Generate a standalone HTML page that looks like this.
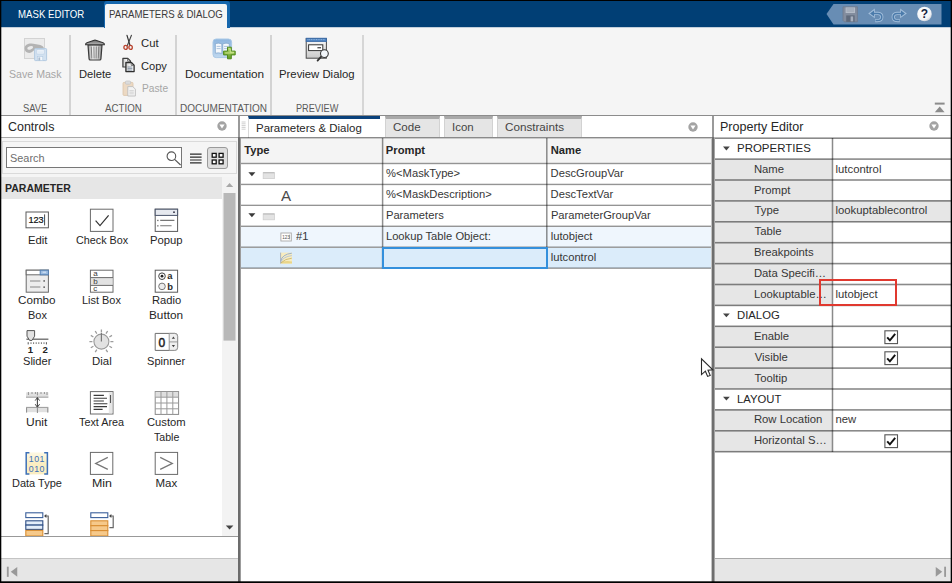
<!DOCTYPE html>
<html lang="en"><head><meta charset="utf-8"><title>Mask Editor</title>
<style>
html,body{margin:0;padding:0;}
body{width:952px;height:583px;overflow:hidden;background:#fff;position:relative;font-family:"Liberation Sans",sans-serif;}
.a{position:absolute;box-sizing:border-box;}
.t{position:absolute;white-space:nowrap;line-height:normal;transform-origin:0 50%;font-family:"Liberation Sans",sans-serif;}
svg{position:absolute;overflow:visible;}
</style></head><body>
<!-- blue title strip -->
<div class="a" style="left:0;top:0;width:952px;height:27px;background:#013f75;"></div>
<div class="a" style="left:0;top:27px;width:952px;height:1px;background:#c2cfdb;"></div>
<!-- toolstrip body -->
<div class="a" style="left:0;top:28px;width:952px;height:87px;background:#f5f5f5;"></div>
<div class="a" style="left:0;top:115px;width:952px;height:1px;background:#8c8c8c;"></div>
<!-- active top tab -->
<div class="a" style="left:104px;top:1px;width:126px;height:27px;background:#1667ad;border-radius:3px 3px 0 0;"></div>
<div class="a" style="left:105px;top:4px;width:122px;height:25px;background:#f5f5f5;border-radius:2px 2px 0 0;"></div>
<!-- toolstrip separators -->
<div class="a" style="left:69px;top:35px;width:2px;height:80px;background:#d3d3d3;"></div>
<div class="a" style="left:175px;top:35px;width:2px;height:80px;background:#d3d3d3;"></div>
<div class="a" style="left:270px;top:35px;width:2px;height:80px;background:#d3d3d3;"></div>
<div class="a" style="left:362px;top:35px;width:2px;height:80px;background:#d6d6d6;"></div>
<!-- Save Mask icon (disabled) -->
<svg style="left:23px;top:37px" width="26" height="26" viewBox="0 0 26 26">
  <rect x="1.5" y="1.5" width="20" height="20" fill="#ebebeb" stroke="#d3d3d3" stroke-width="1"/>
  <path d="M1.6 11.6 C1.6 8.4 4.4 6.6 8.4 6.6 C11.4 6.6 12.6 7.4 14.6 7.6 C18.6 8 21 9.6 21 12 C21 14.4 19 15.8 16.4 15.4 C14.2 15 13.6 13 12 13 C10.2 13 9.4 16 6.2 16 C3.4 16 1.6 14.2 1.6 11.6 Z" fill="#b3b3b3"/>
  <ellipse cx="7.2" cy="10.9" rx="3" ry="1.6" fill="#ebebeb" transform="rotate(-16 7.2 10.9)"/>
  <rect x="11.6" y="11.6" width="12" height="12" rx=".8" fill="#d2e1f0" stroke="#b3cae1" stroke-width="1"/>
  <rect x="13.9" y="12.6" width="7.2" height="4.4" fill="#f1f6fb" stroke="#b9cee3" stroke-width=".6"/>
  <path d="M15 14.2 H20 M15 15.6 H20" stroke="#d2e1f0" stroke-width=".6"/>
  <rect x="14.6" y="19.6" width="5.2" height="4" fill="#f4f8fc" stroke="#b3cae1" stroke-width=".6"/>
  <rect x="15.4" y="20.4" width="1.8" height="3.2" fill="#a9bccf"/>
</svg>
<!-- Delete (trash) -->
<svg style="left:84px;top:38px" width="22" height="24" viewBox="0 0 22 24">
  <defs><linearGradient id="tg" x1="0" x2="1" y1="0" y2="0"><stop offset="0" stop-color="#9c9c9c"/><stop offset=".35" stop-color="#f0f0f0"/><stop offset=".7" stop-color="#d2d2d2"/><stop offset="1" stop-color="#8c8c8c"/></linearGradient>
  <linearGradient id="tl" x1="0" x2="0" y1="0" y2="1"><stop offset="0" stop-color="#6a6a6a"/><stop offset="1" stop-color="#b8b8b8"/></linearGradient></defs>
  <path d="M4 7 L18 7 L16.9 21 Q16.8 22 15.8 22 L6.2 22 Q5.2 22 5.1 21 Z" fill="url(#tg)" stroke="#3a3a3a" stroke-width="1.2"/>
  <path d="M7.3 8.5 L7.8 20.5 M9.9 8.5 L10.1 20.5 M12.3 8.5 L12.1 20.5 M14.8 8.5 L14.3 20.5" stroke="#6a6a6a" stroke-width=".8" fill="none"/>
  <path d="M1.6 6.8 Q1.4 5.4 3 4.8 L9.5 2.4 Q11 1.9 12.5 2.4 L19 4.8 Q20.6 5.4 20.4 6.8 Z" fill="url(#tl)" stroke="#333" stroke-width="1.1"/>
</svg>
<!-- Cut -->
<svg style="left:122px;top:34px" width="14" height="18" viewBox="0 0 14 18">
  <path d="M5 1.4 L8 11.4" stroke="#333" stroke-width="1.2" stroke-linecap="round"/>
  <path d="M9.4 1.4 L5.4 11.4" stroke="#444" stroke-width="1.2" stroke-linecap="round"/>
  <ellipse cx="3.6" cy="13.4" rx="1.7" ry="2" fill="none" stroke="#b8412c" stroke-width="1.3"/>
  <ellipse cx="8.6" cy="13.4" rx="1.7" ry="2" fill="none" stroke="#b8412c" stroke-width="1.3"/>
</svg>
<!-- Copy -->
<svg style="left:122px;top:57px" width="14" height="16" viewBox="0 0 14 16">
  <defs><linearGradient id="cpg" x1="0" x2="1" y1="0" y2="0"><stop offset="0" stop-color="#c9c9c9"/><stop offset=".6" stop-color="#fbfbfb"/></linearGradient></defs>
  <path d="M.9 1.3 L5.8 1.3 L8.4 3.9 L8.4 10 L.9 10 Z" fill="url(#cpg)" stroke="#3c3c3c" stroke-width="1.2" stroke-linejoin="round"/>
  <path d="M5.6 1.6 V4.2 H8.2" fill="none" stroke="#555" stroke-width=".8"/>
  <path d="M3.9 5.5 L9.4 5.5 L12.1 8.2 L12.1 14.6 L3.9 14.6 Z" fill="url(#cpg)" stroke="#2e2e2e" stroke-width="1.3" stroke-linejoin="round"/>
  <path d="M9.2 5.8 V8.4 H11.8" fill="none" stroke="#555" stroke-width=".8"/>
  <path d="M5.6 10 H10.4 M5.6 11.6 H10.4 M5.6 13.1 H10.4" stroke="#6f7f92" stroke-width=".8"/>
</svg>
<!-- Paste (disabled) -->
<svg style="left:122px;top:80px" width="15" height="17" viewBox="0 0 15 17">
  <rect x="1" y="2.4" width="10" height="13" rx="1" fill="#ecd9c3" stroke="#dcc4a8" stroke-width=".8"/>
  <rect x="3.4" y="1" width="5.2" height="3.2" rx="1" fill="#dcdcdc" stroke="#c4c4c4" stroke-width=".7"/>
  <path d="M5.8 6.6 L10.8 6.6 L13.4 9.2 L13.4 16 L5.8 16 Z" fill="#f3f3f3" stroke="#bdbdbd" stroke-width=".9"/>
  <path d="M7.4 10.6 H11.8 M7.4 12.2 H11.8 M7.4 13.8 H11.8" stroke="#c8c8c8" stroke-width=".7"/>
</svg>
<!-- Documentation -->
<svg style="left:212px;top:38px" width="26" height="23" viewBox="0 0 26 23">
  <defs><linearGradient id="dg" x1="0" x2="0" y1="0" y2="1"><stop offset="0" stop-color="#8db5de"/><stop offset="1" stop-color="#c0d8ef"/></linearGradient>
  <linearGradient id="pg" x1="0" x2="0" y1="0" y2="1"><stop offset="0" stop-color="#b5d66a"/><stop offset="1" stop-color="#5f9a23"/></linearGradient></defs>
  <rect x="1" y="1" width="18.6" height="18.6" rx="3.2" fill="url(#dg)" stroke="#a9c8e6" stroke-width="1"/>
  <path d="M3.4 5.6 Q6.6 4.6 9.8 5.8 L9.8 15.4 Q6.6 14.4 3.4 15.2 Z" fill="#f4f8fc" stroke="#6f97c2" stroke-width=".6"/>
  <path d="M10.8 5.8 Q14 4.6 17.2 5.6 L17.2 15.2 Q14 14.4 10.8 15.4 Z" fill="#f4f8fc" stroke="#6f97c2" stroke-width=".6"/>
  <path d="M4.6 8.4 H8.6 M4.6 10.6 H8.6 M12 8.4 H16 M12 10.6 H16" stroke="#9db8d6" stroke-width=".8"/>
  <path d="M15.5 9.2 L19.3 9.2 L19.3 13.1 L23.2 13.1 L23.2 16.9 L19.3 16.9 L19.3 20.8 L15.5 20.8 L15.5 16.9 L11.6 16.9 L11.6 13.1 L15.5 13.1 Z" fill="url(#pg)" stroke="#4f8a1c" stroke-width="1" stroke-linejoin="round"/>
  <path d="M16.6 10.8 H18.2 V14.2 H21.6 V15 H13.2" stroke="#d9efa0" stroke-width=".8" fill="none"/>
</svg>
<!-- Preview Dialog -->
<svg style="left:305px;top:37px" width="26" height="25" viewBox="0 0 26 25">
  <defs><linearGradient id="wg" x1="0" x2="0" y1="0" y2="1"><stop offset="0" stop-color="#fbfbfb"/><stop offset="1" stop-color="#c9c9c9"/></linearGradient></defs>
  <rect x="1.2" y="1.6" width="20.2" height="19.6" fill="url(#wg)" stroke="#4a4a4a" stroke-width="1"/>
  <rect x="1.2" y="1.2" width="20.2" height="3.4" fill="#4e83c1" stroke="#3a6aa6" stroke-width=".8"/>
  <path d="M2.5 2.6 H20" stroke="#9fc0e6" stroke-width=".8" stroke-dasharray="1 .7"/>
  <rect x="3.6" y="7.8" width="14.2" height="5.8" fill="#fff" stroke="#333" stroke-width="1"/>
  <path d="M12.4 10.7 H16" stroke="#555" stroke-width="1.4"/>
  <path d="M16.4 19.4 L12.6 23.6" stroke="#333" stroke-width="1.8" stroke-linecap="round"/>
  <circle cx="19.4" cy="16.6" r="3.9" fill="#f2f6fa" stroke="#3a3a3a" stroke-width="1.1"/>
</svg>
<!-- quick access -->
<svg style="left:826px;top:4px" width="116" height="21" viewBox="0 0 116 21">
  <path d="M0.5 10 L7.5 0 L115.5 0 L115.5 20.5 L7.5 20.5 Z" fill="#688db4"/>
  <!-- floppy -->
  <g>
   <path d="M17 2.8 L31.4 2.8 L31.4 17.8 L18.4 17.8 L17 16.4 Z" fill="#838d9e" stroke="#707a8c" stroke-width=".8"/>
   <rect x="19.6" y="3.4" width="9.4" height="5.6" fill="#b4bcc8"/>
   <path d="M20.6 5 H28 M20.6 7 H28" stroke="#8f99a8" stroke-width=".8"/>
   <rect x="20.2" y="11.4" width="8.4" height="6.4" fill="#5f6a7c"/>
   <rect x="24.6" y="12.4" width="2.6" height="5" fill="#a7b0be"/>
  </g>
  <!-- undo -->
  <g transform="translate(0,1)">
  <path d="M48 8.4 L52 8.4 Q55.8 8.6 55.8 12 Q55.8 15.6 51.4 15.6 L49.2 15.6" fill="none" stroke="#a3bfdb" stroke-width="3.2"/>
  <path d="M42.2 8.4 L48.8 3.6 L48.8 13.2 Z" fill="#a3bfdb"/>
  <path d="M48 8.4 L52 8.4 Q55.8 8.6 55.8 12 Q55.8 15.6 51.4 15.6 L49.6 15.6" fill="none" stroke="#4b7bab" stroke-width="1.5"/>
  <path d="M44 8.4 L48 5.4 L48 11.4 Z" fill="#4b7bab"/>
  <!-- redo -->
  <path d="M75 8.4 L71 8.4 Q67.2 8.6 67.2 12 Q67.2 15.6 71.6 15.6 L73.8 15.6" fill="none" stroke="#a3bfdb" stroke-width="3.2"/>
  <path d="M80.8 8.4 L74.2 3.6 L74.2 13.2 Z" fill="#a3bfdb"/>
  <path d="M75 8.4 L71 8.4 Q67.2 8.6 67.2 12 Q67.2 15.6 71.6 15.6 L73.4 15.6" fill="none" stroke="#4b7bab" stroke-width="1.5"/>
  <path d="M79 8.4 L75 5.4 L75 11.4 Z" fill="#4b7bab"/>
  </g>
  <!-- help -->
  <defs><radialGradient id="hg" cx=".4" cy=".35" r=".7"><stop offset="0" stop-color="#fff"/><stop offset=".75" stop-color="#f1f3f6"/><stop offset="1" stop-color="#c3c9d2"/></radialGradient></defs>
  <circle cx="98.5" cy="10" r="7.3" fill="url(#hg)"/>
  <text x="98.5" y="14.3" text-anchor="middle" font-family="Liberation Sans, sans-serif" font-weight="700" font-size="12" fill="#15233f">?</text>
</svg>
<!-- collapse -->
<svg style="left:934px;top:102px" width="12" height="11" viewBox="0 0 12 11">
  <rect x=".8" y=".6" width="9.8" height="2" fill="#8c8c8c"/>
  <path d="M5.7 4.4 L10.6 10.2 L.8 10.2 Z" fill="#8c8c8c"/>
</svg>


<!-- ===== left panel ===== -->
<div class="a" style="left:1px;top:116px;width:237px;height:22px;background:#fff;"></div>
<div class="a" style="left:1px;top:137px;width:237px;height:1px;background:rgba(0,0,0,0.342);"></div>
<div class="a" style="left:1px;top:138px;width:237px;height:1px;background:rgba(0,0,0,0.198);"></div>
<div class="a" style="left:1px;top:138px;width:237px;height:399px;background:#f5f5f5;"></div>
<!-- search row frame -->
<div class="a" style="left:2px;top:141px;width:235px;height:33px;border:1px solid #dadada;background:#f5f5f5;"></div>
<div class="a" style="left:6px;top:147px;width:176px;height:21px;border:1px solid #777;background:#fff;"></div>
<div class="a" style="left:207px;top:147px;width:21px;height:22px;border:1px solid #9a9a9a;background:#dedede;border-radius:3px;"></div>
<!-- list area -->
<div class="a" style="left:1px;top:177px;width:222px;height:360px;background:#fff;"></div>
<div class="a" style="left:1px;top:177px;width:221px;height:22px;background:#e6e6e6;"></div>
<!-- scrollbar -->
<div class="a" style="left:222px;top:177px;width:15px;height:360px;background:#f3f3f3;"></div>
<svg style="left:223px;top:193px" width="14" height="148"><rect x=".5" y="0" width="12" height="147.6" fill="#b8b8b8"/></svg>
<!-- header dropdown circle -->
<svg style="left:216.6px;top:121.4px" width="10" height="10" viewBox="0 0 10 10"><circle cx="5" cy="5" r="4.7" fill="#a3a3a3"/><path d="M2.4 3.4 L7.6 3.4 L5 7.4 Z" fill="#fff"/></svg>
<!-- magnifier -->
<svg style="left:165px;top:150px" width="18" height="17" viewBox="0 0 18 17"><circle cx="6.4" cy="6.2" r="4.3" fill="none" stroke="#555" stroke-width="1.1"/><path d="M9.6 9.4 L15.6 15" stroke="#555" stroke-width="1.2"/></svg>
<!-- list view icon -->
<svg style="left:190px;top:152px" width="12" height="13" viewBox="0 0 12 13"><path d="M0 2.2 H11.6 M0 5.1 H11.6 M0 8 H11.6 M0 10.9 H11.6" stroke="#2b2b2b" stroke-width="1.2"/></svg>
<!-- grid icon -->
<svg style="left:211px;top:152px" width="14" height="13" viewBox="0 0 14 13">
 <rect x="1.2" y="1.4" width="4" height="3.8" fill="#fff" stroke="#111" stroke-width="1.3"/>
 <rect x="8.1" y="1.4" width="4" height="3.8" fill="#fff" stroke="#111" stroke-width="1.3"/>
 <rect x="1.2" y="8" width="4" height="3.8" fill="#fff" stroke="#111" stroke-width="1.3"/>
 <rect x="8.1" y="8" width="4" height="3.8" fill="#fff" stroke="#111" stroke-width="1.3"/>
</svg>
<!-- scrollbar arrows -->
<svg style="left:225px;top:182px" width="10" height="6" viewBox="0 0 10 6"><path d="M1 5 L4.6 1 L8.2 5 Z" fill="#a8a8a8"/></svg>
<svg style="left:225px;top:524px" width="10" height="7" viewBox="0 0 10 7"><path d="M.8 1.4 L8.4 1.4 L4.6 5.6 Z" fill="#444"/></svg>

<!-- Edit -->
<svg style="left:25px;top:211px" width="25" height="18" viewBox="0 0 25 18">
 <rect x="1" y="1" width="22.4" height="15.8" fill="#fff" stroke="#5a5a5a" stroke-width="1"/>
 <text x="3.4" y="12.4" font-family="Liberation Sans, sans-serif" font-weight="400" font-size="9.2" fill="#111" stroke="#111" stroke-width=".2">123</text>
 <path d="M19.6 3.4 V14.4" stroke="#333" stroke-width=".9"/>
</svg>
<!-- Check Box -->
<svg style="left:89px;top:208px" width="26" height="25" viewBox="0 0 26 25">
 <rect x="1.4" y="1.2" width="22.6" height="22.2" fill="#fff" stroke="#6a6a6a" stroke-width="1"/>
 <path d="M6.6 12.6 L11 17.6 L19.6 7.4" fill="none" stroke="#333" stroke-width="1.2"/>
</svg>
<!-- Popup -->
<svg style="left:154px;top:208px" width="26" height="25" viewBox="0 0 26 25">
 <rect x="1.2" y="1.2" width="22.4" height="22.2" fill="#fff" stroke="#5a5a5a" stroke-width="1"/>
 <rect x="1.2" y="1.2" width="22.4" height="6.2" fill="#e6e9ef" stroke="#4a546a" stroke-width="1"/>
 <rect x="19" y="3.4" width="2" height="1.6" fill="#556"/>
 <path d="M6.2 12.4 H20.4 M6.2 17.8 H17.6" stroke="#777" stroke-width="1.1"/>
 <rect x="3.2" y="11.8" width="1.3" height="1.3" fill="#666"/><rect x="3.2" y="17.2" width="1.3" height="1.3" fill="#666"/>
</svg>
<!-- Combo Box -->
<svg style="left:25px;top:269px" width="25" height="25" viewBox="0 0 25 25">
 <rect x="1.2" y="1.2" width="22.2" height="22" fill="#ededed" stroke="#6a6a6a" stroke-width="1"/>
 <rect x="1.2" y="1.2" width="22.2" height="4.6" fill="#fff" stroke="#6a6a6a" stroke-width="1"/>
 <rect x="15.2" y="1.2" width="8.2" height="4.6" fill="#9dbde2" stroke="#5580b4" stroke-width="1"/>
 <path d="M17.6 3.2 h3.4" stroke="#dbe8f6" stroke-width="1"/>
 <path d="M5 12 H15.4 M5 18 H15.4" stroke="#888" stroke-width="1.1"/>
 <rect x="18.4" y="11.2" width="1.5" height="1.5" fill="#555"/><rect x="18.4" y="17.4" width="1.5" height="1.5" fill="#555"/>
</svg>
<!-- List Box -->
<svg style="left:89px;top:269px" width="26" height="25" viewBox="0 0 26 25">
 <rect x="1.4" y="1.2" width="22.6" height="22" fill="#fff" stroke="#6a6a6a" stroke-width="1"/>
 <rect x="1.9" y="8.6" width="21.6" height="7.8" fill="#e2e2e2"/>
 <path d="M1.4 8.6 H24 M1.4 16.4 H24" stroke="#6a6a6a" stroke-width="1"/>
 <text x="4.2" y="7.2" font-family="Liberation Sans, sans-serif" font-size="8" fill="#3a3a3a">a</text>
 <text x="4.2" y="15.4" font-family="Liberation Sans, sans-serif" font-size="8" fill="#3a3a3a">b</text>
 <text x="4.2" y="22.4" font-family="Liberation Sans, sans-serif" font-size="8" fill="#3a3a3a">c</text>
</svg>
<!-- Radio Button -->
<svg style="left:154px;top:269px" width="26" height="25" viewBox="0 0 26 25">
 <rect x="1.2" y="1.2" width="22.4" height="22" fill="#fff" stroke="#5a5a5a" stroke-width="1"/>
 <circle cx="8" cy="7.2" r="3.3" fill="#fff" stroke="#444" stroke-width="1"/><circle cx="8" cy="7.2" r="1.4" fill="#222"/>
 <circle cx="8" cy="17.4" r="3.3" fill="#ececec" stroke="#777" stroke-width="1"/>
 <text x="13.2" y="10.2" font-family="Liberation Sans, sans-serif" font-weight="700" font-size="9.4" fill="#2a2a2a">a</text>
 <text x="13.2" y="20.8" font-family="Liberation Sans, sans-serif" font-weight="700" font-size="9.4" fill="#2a2a2a">b</text>
</svg>
<!-- Slider -->
<svg style="left:25px;top:329px" width="25" height="26" viewBox="0 0 25 26">
 <path d="M1.4 10.2 H23.4" stroke="#666" stroke-width="1.3"/>
 <path d="M2 1.6 H9.6 V7.2 L7 11.4 H4.6 L2 7.2 Z" fill="#e2e2e2" stroke="#555" stroke-width="1"/>
 <path d="M3.2 13.2 v2.2 M6 13.4 v1.4 M8.6 13.4 v1.4 M11.2 13.4 v1.4 M13.8 13.4 v1.4 M16.4 13.4 v1.4 M19 13.4 v1.4 M21.4 13.2 v2.2" stroke="#555" stroke-width="1"/>
 <text x="2.8" y="24.4" font-family="Liberation Sans, sans-serif" font-weight="700" font-size="9.6" fill="#222">1</text>
 <text x="17.6" y="24.4" font-family="Liberation Sans, sans-serif" font-weight="700" font-size="9.6" fill="#222">2</text>
</svg>
<!-- Dial -->
<svg style="left:89px;top:329px" width="26" height="26" viewBox="0 0 26 26">
 <g stroke="#9c9c9c" stroke-width="1.3">
 <path d="M12.4 .6 V3.4 M18.6 2 L17 4.6 M23 6.4 L20.4 8 M24.4 12.6 H21.4 M23 18.8 L20.4 17.2 M18.6 23.2 L17 20.6 M6.2 2 L7.8 4.6 M1.8 6.4 L4.4 8 M.4 12.6 H3.4 M1.8 18.8 L4.4 17.2 M6.2 23.2 L7.8 20.6"/>
 </g>
 <circle cx="12.4" cy="12.6" r="7.5" fill="#e2e2e2" stroke="#9a9a9a" stroke-width="1.1"/>
 <path d="M12.4 12.6 V4" stroke="#7a7a7a" stroke-width="1.2"/>
</svg>
<!-- Spinner -->
<svg style="left:154px;top:332px" width="26" height="20" viewBox="0 0 26 20">
 <path d="M1.2 1.4 H20.6 Q23.6 1.4 23.6 4.4 V15.4 Q23.6 18.4 20.6 18.4 H1.2 Z" fill="#fff" stroke="#6e6e6e" stroke-width="1"/>
 <path d="M15.2 1.4 H20.6 Q23.6 1.4 23.6 4.4 V15.4 Q23.6 18.4 20.6 18.4 H15.2 Z" fill="#efefef" stroke="#8e8e8e" stroke-width=".9"/>
 <path d="M15.2 9.9 H23.6" stroke="#8e8e8e" stroke-width=".9"/>
 <path d="M17.8 6.8 L19.4 4.6 L21 6.8 Z M17.8 13 L19.4 15.2 L21 13 Z" fill="#444"/>
 <text x="4.6" y="14.6" font-family="Liberation Sans, sans-serif" font-weight="400" font-size="12" fill="#1a1a1a" stroke="#1a1a1a" stroke-width=".45">0</text>
</svg>
<!-- Unit -->
<svg style="left:25px;top:391px" width="25" height="24" viewBox="0 0 25 24">
 <rect x="1" y="1.4" width="22.4" height="4.6" fill="#e0e0e0"/>
 <path d="M1 6.2 H23.4" stroke="#9a9a9a" stroke-width="1"/>
 <path d="M3.4 1 v3 M7 1 v2 M10.4 1 v2 M12.4 1 v3.4 M16 1 v2 M19.4 1 v2 M22 1 v3" stroke="#8a8a8a" stroke-width=".9"/>
 <rect x="1" y="16.6" width="22.4" height="4.6" fill="#e0e0e0"/>
 <path d="M1 16.4 H23.4" stroke="#9a9a9a" stroke-width="1"/>
 <path d="M1.6 17 v4.6 M22.8 17 v4.6 M12.4 17 v5" stroke="#8a8a8a" stroke-width="1"/>
 <path d="M12.4 6.6 V16" stroke="#444" stroke-width="1.1"/>
 <path d="M10.2 9.6 L12.4 6.6 L14.6 9.6 M10.2 13.2 L12.4 16.2 L14.6 13.2" fill="none" stroke="#444" stroke-width="1"/>
</svg>
<!-- Text Area -->
<svg style="left:89px;top:390px" width="26" height="25" viewBox="0 0 26 25">
 <rect x="1.4" y="1.6" width="22.6" height="22.4" fill="#fff" stroke="#6a6a6a" stroke-width="1"/>
 <rect x="19.8" y="2.2" width="3.6" height="21.2" fill="#e6e6e6"/>
 <path d="M21.5 5 V13" stroke="#555" stroke-width="1.1"/>
 <path d="M4.6 5.4 H14.9 M4.6 8.2 H18 M4.6 11 H14.9 M4.6 13.8 H18.4 M4.6 16.6 H18 M4.6 19.4 H13.6" stroke="#3a3a3a" stroke-width="1.1"/>
</svg>
<!-- Custom Table -->
<svg style="left:154px;top:390px" width="27" height="26" viewBox="0 0 27 26">
 <rect x="1.2" y="1.6" width="23.4" height="22.8" fill="#fff" stroke="#8a8a8a" stroke-width="1"/>
 <rect x="1.7" y="2.1" width="22.4" height="5" fill="#dedede"/>
 <path d="M1.2 7.2 H24.6 M1.2 13 H24.6 M1.2 18.8 H24.6 M7 1.6 V24.4 M12.9 1.6 V24.4 M18.8 1.6 V24.4" stroke="#9a9a9a" stroke-width="1"/>
</svg>
<!-- Data Type -->
<svg style="left:24px;top:451px" width="26" height="25" viewBox="0 0 26 25">
 <defs><linearGradient id="dtg" x1="0" x2="0" y1="0" y2="1"><stop offset="0" stop-color="#fdf8e4"/><stop offset=".5" stop-color="#fbeec2"/><stop offset="1" stop-color="#fbeec2"/></linearGradient></defs>
 <rect x="2" y="1.4" width="21.6" height="22" fill="url(#dtg)"/>
 <path d="M5.4 1.8 H2.2 V23 H5.4 M20.2 1.8 H23.4 V23 H20.2" fill="none" stroke="#3d70b8" stroke-width="1.5"/>
 <text x="12.9" y="10.6" text-anchor="middle" font-family="Liberation Sans, sans-serif" font-size="8.8" fill="#3d70b8" letter-spacing=".5">101</text>
 <text x="12.9" y="20.6" text-anchor="middle" font-family="Liberation Sans, sans-serif" font-size="8.8" fill="#3d70b8" letter-spacing=".5">010</text>
</svg>
<!-- Min -->
<svg style="left:89px;top:451px" width="26" height="25" viewBox="0 0 26 25">
 <rect x="1.4" y="1.4" width="22.4" height="22" fill="#fff" stroke="#6a6a6a" stroke-width="1"/>
 <path d="M18.8 6.4 L6.6 12.4 L18.8 18.4" fill="none" stroke="#777" stroke-width="1.2"/>
</svg>
<!-- Max -->
<svg style="left:154px;top:451px" width="26" height="25" viewBox="0 0 26 25">
 <rect x="1.2" y="1.4" width="22.4" height="22" fill="#fff" stroke="#6a6a6a" stroke-width="1"/>
 <path d="M6.2 6.4 L18.4 12.4 L6.2 18.4" fill="none" stroke="#777" stroke-width="1.2"/>
</svg>
<!-- row 6 a -->
<svg style="left:24px;top:511px" width="27" height="26" viewBox="0 0 27 26">
 <rect x="1.8" y="1.8" width="17" height="4.8" fill="#fff" stroke="#3a5f9a" stroke-width="1.1"/>
 <rect x="1.8" y="9.8" width="17" height="4.3" fill="#e4eef9" stroke="#2f4f86" stroke-width="1.1"/>
 <rect x="1.8" y="14.1" width="17" height="4.3" fill="#e4eef9" stroke="#2f4f86" stroke-width="1.1"/>
 <rect x="1.8" y="19.4" width="17" height="5.6" fill="#f6c98a" stroke="#d98e32" stroke-width="1.1"/>
 <path d="M20.4 22.6 H24.2 V5 H21.6" fill="none" stroke="#666" stroke-width="1.2"/>
 <path d="M20 5 L22.4 3 V7 Z" fill="#444"/>
</svg>
<!-- row 6 b -->
<svg style="left:89px;top:511px" width="27" height="26" viewBox="0 0 27 26">
 <rect x="1.8" y="1.8" width="17" height="4.8" fill="#fff" stroke="#3a5f9a" stroke-width="1.1"/>
 <rect x="1.8" y="9.8" width="17" height="4.9" fill="#f6c98a" stroke="#d98e32" stroke-width="1.1"/>
 <rect x="1.8" y="14.7" width="17" height="4.9" fill="#f6c98a" stroke="#d98e32" stroke-width="1.1"/>
 <rect x="1.8" y="19.6" width="17" height="5.4" fill="#f6c98a" stroke="#d98e32" stroke-width="1.1"/>
 <path d="M20.4 16.6 H24.2 V5 H21.6" fill="none" stroke="#666" stroke-width="1.2"/>
 <path d="M20 5 L22.4 3 V7 Z" fill="#444"/>
</svg>

<div class="a" style="left:1px;top:536px;width:237px;height:1px;background:#999;"></div>
<div class="a" style="left:1px;top:537px;width:237px;height:22px;background:#fff;"></div>
<div class="a" style="left:1px;top:558px;width:237px;height:1px;background:#c4c4c4;"></div>
<div class="a" style="left:1px;top:559px;width:237px;height:23px;background:#e6e6e6;"></div>

<!-- ===== center panel ===== -->
<div class="a" style="left:240px;top:116px;width:472px;height:22px;background:#fff;"></div>
<!-- active tab -->
<div class="a" style="left:248px;top:116px;width:132px;height:22px;background:#fff;border-top:3px solid #0a417b;border-left:1px solid #d8d8d8;"></div>

<div class="a" style="left:385px;top:116px;width:55px;height:21px;background:#e5e5e5;border-top:3px solid #a9a9a9;border-left:1px solid #d2d2d2;border-right:1px solid #d2d2d2;"></div>
<div class="a" style="left:444px;top:116px;width:49px;height:21px;background:#e5e5e5;border-top:3px solid #a9a9a9;border-left:1px solid #d2d2d2;border-right:1px solid #d2d2d2;"></div>
<div class="a" style="left:497px;top:116px;width:85px;height:21px;background:#e5e5e5;border-top:3px solid #a9a9a9;border-left:1px solid #d2d2d2;border-right:1px solid #d2d2d2;"></div>
<div class="a" style="left:240px;top:137px;width:472px;height:1px;background:rgba(0,0,0,0.460);"></div>
<div class="a" style="left:240px;top:138px;width:472px;height:1px;background:rgba(0,0,0,0.207);"></div>
<!-- table header -->
<div class="a" style="left:240px;top:139px;width:472px;height:24px;background:#f4f4f4;"></div>
<!-- rows -->
<div class="a" style="left:240px;top:227px;width:472px;height:20px;background:#eff6fd;"></div>
<div class="a" style="left:240px;top:248px;width:472px;height:20px;background:#dbecfa;"></div>
<div class="a" style="left:241px;top:162px;width:471px;height:1px;background:rgba(0,0,0,0.084);"></div>
<div class="a" style="left:241px;top:163px;width:471px;height:1px;background:rgba(0,0,0,0.420);"></div>
<div class="a" style="left:241px;top:164px;width:471px;height:1px;background:rgba(0,0,0,0.084);"></div>
<div class="a" style="left:241px;top:183px;width:471px;height:1px;background:rgba(0,0,0,0.113);"></div>
<div class="a" style="left:241px;top:184px;width:471px;height:1px;background:rgba(0,0,0,0.420);"></div>
<div class="a" style="left:241px;top:185px;width:471px;height:1px;background:rgba(0,0,0,0.055);"></div>
<div class="a" style="left:241px;top:204px;width:471px;height:1px;background:rgba(0,0,0,0.143);"></div>
<div class="a" style="left:241px;top:205px;width:471px;height:1px;background:rgba(0,0,0,0.420);"></div>
<div class="a" style="left:241px;top:225px;width:471px;height:1px;background:rgba(0,0,0,0.172);"></div>
<div class="a" style="left:241px;top:226px;width:471px;height:1px;background:rgba(0,0,0,0.416);"></div>
<div class="a" style="left:241px;top:246px;width:471px;height:1px;background:rgba(0,0,0,0.202);"></div>
<div class="a" style="left:241px;top:247px;width:471px;height:1px;background:rgba(0,0,0,0.386);"></div>
<div class="a" style="left:241px;top:267px;width:471px;height:1px;background:rgba(0,0,0,0.231);"></div>
<div class="a" style="left:241px;top:268px;width:471px;height:1px;background:rgba(0,0,0,0.357);"></div>
<!-- col lines -->
<div class="a" style="left:381px;top:138px;width:1px;height:131px;background:rgba(0,0,0,0.066);"></div>
<div class="a" style="left:382px;top:138px;width:1px;height:131px;background:rgba(0,0,0,0.440);"></div>
<div class="a" style="left:383px;top:138px;width:1px;height:131px;background:rgba(0,0,0,0.154);"></div>
<div class="a" style="left:546px;top:138px;width:1px;height:131px;background:rgba(0,0,0,0.418);"></div>
<div class="a" style="left:547px;top:138px;width:1px;height:131px;background:rgba(0,0,0,0.242);"></div>
<!-- selected cell -->
<div class="a" style="left:382px;top:247px;width:166px;height:22px;border:2px solid #3490dc;background:#dbecfa;"></div>
<!-- grip -->
<svg style="left:241px;top:121px" width="6" height="10" viewBox="0 0 6 10"><path d="M.6 1 H4.6 M.6 2.8 H4.6 M.6 4.6 H4.6 M.6 6.4 H4.6 M.6 8.2 H4.6" stroke="#c9c9c9" stroke-width=".9"/></svg>
<!-- options circle -->
<svg style="left:687.5px;top:121.5px" width="10" height="10" viewBox="0 0 10 10"><circle cx="5" cy="5" r="4.7" fill="#a3a3a3"/><path d="M2.4 3.4 L7.6 3.4 L5 7.4 Z" fill="#fff"/></svg>
<!-- tree arrows -->
<svg style="left:248px;top:171.6px" width="8" height="5" viewBox="0 0 8 5"><path d="M.4 .3 L7.4 .3 L3.9 4.2 Z" fill="#3a3a3a"/></svg>
<svg style="left:248px;top:213.4px" width="8" height="5" viewBox="0 0 8 5"><path d="M.4 .3 L7.4 .3 L3.9 4.2 Z" fill="#3a3a3a"/></svg>
<!-- group icons -->
<svg style="left:262px;top:171px" width="14" height="9" viewBox="0 0 14 9"><rect x="1.2" y="1.6" width="11.2" height="6" fill="#e3e3e3" stroke="#cfcfcf" stroke-width=".8"/><path d="M1.2 1.8 H12.4" stroke="#b8b8b8" stroke-width="1"/></svg>
<svg style="left:262px;top:212px" width="14" height="9" viewBox="0 0 14 9"><rect x="1.2" y="1.8" width="11.2" height="6" fill="#e3e3e3" stroke="#cfcfcf" stroke-width=".8"/><path d="M1.2 2 H12.4" stroke="#b8b8b8" stroke-width="1"/></svg>
<!-- small edit icon -->
<svg style="left:280px;top:232px" width="13" height="10" viewBox="0 0 13 10"><rect x=".9" y="1" width="10.4" height="8" fill="#fff" stroke="#a8a8a8" stroke-width=".9"/><text x="2.2" y="6.9" font-family="Liberation Sans, sans-serif" font-size="4.6" fill="#555">123</text><path d="M9.6 2.6 V7.4" stroke="#777" stroke-width=".6"/></svg>
<!-- lookup table icon -->
<svg style="left:280px;top:252px" width="13" height="12" viewBox="0 0 13 12">
 <rect x=".6" y=".6" width="11.4" height="11" fill="#f7ecbf"/>
 <path d="M.6 11.6 H12 L12 9.4 Q6 8.4 .6 10 Z" fill="#e9d58a"/>
 <path d="M.8 9 Q2 2.4 11.8 1.2" fill="none" stroke="#8fa9cf" stroke-width=".9"/>
 <path d="M.8 10 Q3.4 4.6 11.8 3.6" fill="none" stroke="#a9bddb" stroke-width=".8"/>
 <path d="M1 10.8 Q5 6.8 11.8 6.2" fill="none" stroke="#c4b06a" stroke-width=".8"/>
 <path d="M.6 .6 V11.6" stroke="#9aa6b8" stroke-width=".8"/>
</svg>

<!-- splitter left/center -->
<div class="a" style="left:238px;top:116px;width:2px;height:21px;background:#9a9a9a;"></div>
<div class="a" style="left:238px;top:137px;width:2px;height:445px;background:#6c6c6c;"></div>
<div class="a" style="left:240px;top:138px;width:1px;height:444px;background:#9c9c9c;"></div>
<!-- splitter center/right -->


<!-- ===== right panel ===== -->
<div class="a" style="left:714px;top:116px;width:237px;height:22px;background:#fff;"></div>
<div class="a" style="left:714px;top:159px;width:118px;height:21px;background:#e6e6e6;"></div>
<div class="a" style="left:714px;top:180px;width:118px;height:21px;background:#e6e6e6;"></div>
<div class="a" style="left:714px;top:200px;width:118px;height:22px;background:#e6e6e6;"></div>
<div class="a" style="left:833px;top:200px;width:118px;height:22px;background:#e6e6e6;"></div>
<div class="a" style="left:714px;top:221px;width:118px;height:22px;background:#e6e6e6;"></div>
<div class="a" style="left:714px;top:242px;width:118px;height:22px;background:#e6e6e6;"></div>
<div class="a" style="left:714px;top:263px;width:118px;height:22px;background:#e6e6e6;"></div>
<div class="a" style="left:714px;top:284px;width:118px;height:22px;background:#e6e6e6;"></div>
<div class="a" style="left:714px;top:326px;width:118px;height:22px;background:#e6e6e6;"></div>
<div class="a" style="left:714px;top:347px;width:118px;height:22px;background:#e6e6e6;"></div>
<div class="a" style="left:714px;top:368px;width:118px;height:21px;background:#e6e6e6;"></div>
<div class="a" style="left:714px;top:409px;width:118px;height:22px;background:#e6e6e6;"></div>
<div class="a" style="left:714px;top:430px;width:118px;height:22px;background:#e6e6e6;"></div>
<div class="a" style="left:714px;top:452px;width:237px;height:20px;background:#fff;"></div>
<div class="a" style="left:714px;top:137px;width:237px;height:1px;background:rgba(0,0,0,0.276);"></div>
<div class="a" style="left:714px;top:138px;width:237px;height:1px;background:rgba(0,0,0,0.460);"></div>
<div class="a" style="left:714px;top:158px;width:237px;height:1px;background:rgba(0,0,0,0.322);"></div>
<div class="a" style="left:714px;top:159px;width:237px;height:1px;background:rgba(0,0,0,0.414);"></div>
<div class="a" style="left:714px;top:179px;width:237px;height:1px;background:rgba(0,0,0,0.368);"></div>
<div class="a" style="left:714px;top:180px;width:237px;height:1px;background:rgba(0,0,0,0.368);"></div>
<div class="a" style="left:714px;top:200px;width:237px;height:1px;background:rgba(0,0,0,0.414);"></div>
<div class="a" style="left:714px;top:201px;width:237px;height:1px;background:rgba(0,0,0,0.322);"></div>
<div class="a" style="left:714px;top:221px;width:237px;height:1px;background:rgba(0,0,0,0.460);"></div>
<div class="a" style="left:714px;top:222px;width:237px;height:1px;background:rgba(0,0,0,0.276);"></div>
<div class="a" style="left:714px;top:241px;width:237px;height:1px;background:rgba(0,0,0,0.046);"></div>
<div class="a" style="left:714px;top:242px;width:237px;height:1px;background:rgba(0,0,0,0.460);"></div>
<div class="a" style="left:714px;top:243px;width:237px;height:1px;background:rgba(0,0,0,0.230);"></div>
<div class="a" style="left:714px;top:262px;width:237px;height:1px;background:rgba(0,0,0,0.092);"></div>
<div class="a" style="left:714px;top:263px;width:237px;height:1px;background:rgba(0,0,0,0.460);"></div>
<div class="a" style="left:714px;top:264px;width:237px;height:1px;background:rgba(0,0,0,0.184);"></div>
<div class="a" style="left:714px;top:283px;width:237px;height:1px;background:rgba(0,0,0,0.138);"></div>
<div class="a" style="left:714px;top:284px;width:237px;height:1px;background:rgba(0,0,0,0.460);"></div>
<div class="a" style="left:714px;top:285px;width:237px;height:1px;background:rgba(0,0,0,0.138);"></div>
<div class="a" style="left:714px;top:304px;width:237px;height:1px;background:rgba(0,0,0,0.184);"></div>
<div class="a" style="left:714px;top:305px;width:237px;height:1px;background:rgba(0,0,0,0.460);"></div>
<div class="a" style="left:714px;top:306px;width:237px;height:1px;background:rgba(0,0,0,0.092);"></div>
<div class="a" style="left:714px;top:325px;width:237px;height:1px;background:rgba(0,0,0,0.230);"></div>
<div class="a" style="left:714px;top:326px;width:237px;height:1px;background:rgba(0,0,0,0.460);"></div>
<div class="a" style="left:714px;top:327px;width:237px;height:1px;background:rgba(0,0,0,0.046);"></div>
<div class="a" style="left:714px;top:346px;width:237px;height:1px;background:rgba(0,0,0,0.276);"></div>
<div class="a" style="left:714px;top:347px;width:237px;height:1px;background:rgba(0,0,0,0.460);"></div>
<div class="a" style="left:714px;top:367px;width:237px;height:1px;background:rgba(0,0,0,0.322);"></div>
<div class="a" style="left:714px;top:368px;width:237px;height:1px;background:rgba(0,0,0,0.414);"></div>
<div class="a" style="left:714px;top:388px;width:237px;height:1px;background:rgba(0,0,0,0.368);"></div>
<div class="a" style="left:714px;top:389px;width:237px;height:1px;background:rgba(0,0,0,0.368);"></div>
<div class="a" style="left:714px;top:409px;width:237px;height:1px;background:rgba(0,0,0,0.414);"></div>
<div class="a" style="left:714px;top:410px;width:237px;height:1px;background:rgba(0,0,0,0.322);"></div>
<div class="a" style="left:714px;top:430px;width:237px;height:1px;background:rgba(0,0,0,0.460);"></div>
<div class="a" style="left:714px;top:431px;width:237px;height:1px;background:rgba(0,0,0,0.276);"></div>
<div class="a" style="left:714px;top:450px;width:237px;height:1px;background:rgba(0,0,0,0.046);"></div>
<div class="a" style="left:714px;top:451px;width:237px;height:1px;background:rgba(0,0,0,0.460);"></div>
<div class="a" style="left:714px;top:452px;width:237px;height:1px;background:rgba(0,0,0,0.230);"></div>
<div class="a" style="left:831px;top:138px;width:1px;height:314px;background:rgba(0,0,0,0.115);"></div>
<div class="a" style="left:832px;top:138px;width:1px;height:314px;background:rgba(0,0,0,0.460);"></div>
<div class="a" style="left:833px;top:138px;width:1px;height:314px;background:rgba(0,0,0,0.115);"></div>
<div class="a" style="left:714px;top:558px;width:237px;height:1px;background:#a8a8a8;"></div>
<div class="a" style="left:714px;top:559px;width:237px;height:23px;background:#e6e6e6;"></div>
<!-- splitter center/right -->
<div class="a" style="left:712px;top:116px;width:2px;height:21px;background:#9a9a9a;"></div>
<div class="a" style="left:711px;top:138px;width:1px;height:444px;background:#c4c4c4;"></div>
<div class="a" style="left:712px;top:137px;width:2px;height:445px;background:#6e6e6e;"></div>
<div class="a" style="left:714px;top:138px;width:1px;height:444px;background:#a6a6a6;"></div>
<!-- red highlight -->
<div class="a" style="left:819px;top:279px;width:78px;height:27px;border:2px solid #e0392f;"></div>
<svg style="left:929px;top:121.4px" width="10" height="10" viewBox="0 0 10 10"><circle cx="5" cy="5" r="4.7" fill="#a3a3a3"/><path d="M2.4 3.4 L7.6 3.4 L5 7.4 Z" fill="#fff"/></svg>
<!-- section triangles -->
<svg style="left:722px;top:146px" width="9" height="5" viewBox="0 0 9 5"><path d="M1 .6 L7.8 .6 L4.4 4.4 Z" fill="#444"/></svg>
<svg style="left:722px;top:313px" width="9" height="5" viewBox="0 0 9 5"><path d="M1 .4 L7.8 .4 L4.4 4.2 Z" fill="#444"/></svg>
<svg style="left:722px;top:396px" width="9" height="5" viewBox="0 0 9 5"><path d="M1 .8 L7.8 .8 L4.4 4.6 Z" fill="#444"/></svg>
<!-- checkboxes -->
<svg style="left:884px;top:330px" width="15" height="15" viewBox="0 0 15 15"><rect x=".9" y=".8" width="12.6" height="12.8" fill="#fff" stroke="#555" stroke-width="1.1"/><path d="M3.2 7.4 L5.9 10.4 L11.2 3.8" fill="none" stroke="#111" stroke-width="1.9"/></svg>
<svg style="left:884px;top:351px" width="15" height="15" viewBox="0 0 15 15"><rect x=".9" y=".8" width="12.6" height="12.8" fill="#fff" stroke="#555" stroke-width="1.1"/><path d="M3.2 7.4 L5.9 10.4 L11.2 3.8" fill="none" stroke="#111" stroke-width="1.9"/></svg>
<svg style="left:884px;top:434px" width="15" height="15" viewBox="0 0 15 15"><rect x=".9" y=".8" width="12.6" height="12.8" fill="#fff" stroke="#555" stroke-width="1.1"/><path d="M3.2 7.4 L5.9 10.4 L11.2 3.8" fill="none" stroke="#111" stroke-width="1.9"/></svg>
<!-- footer nav icons -->
<svg style="left:6px;top:565.5px" width="13" height="12" viewBox="0 0 12 11"><rect x=".8" y=".6" width="1.7" height="9.4" fill="#999"/><path d="M4.4 5.3 L10.4 .8 V9.8 Z" fill="#999"/></svg>
<svg style="left:933.5px;top:566px" width="13" height="12" viewBox="0 0 12 11"><rect x="9.4" y=".6" width="1.7" height="9.4" fill="#999"/><path d="M7.6 5.3 L1.6 .8 V9.8 Z" fill="#999"/></svg>
<!-- mouse cursor -->
<svg style="left:700px;top:357px" width="15" height="22" viewBox="0 0 15 22"><path d="M1.5 1.8 V17.6 L5.4 14.2 L7.6 19.4 L10.2 18.4 L8 13.2 L12.8 12.8 Z" fill="#fff" stroke="#2a2a2a" stroke-width="1.1" stroke-linejoin="miter"/></svg>


<span class="t" style="left:18.20px;top:8.00px;font-size:10.5px;color:#ffffff;transform:scaleX(0.9187);">MASK EDITOR</span>
<span class="t" style="left:108.80px;top:8.00px;font-size:10.5px;color:#3a3a3a;transform:scaleX(0.9169);">PARAMETERS &amp; DIALOG</span>
<span class="t" style="left:9.04px;top:68.00px;font-size:11.5px;color:#a6a6a6;transform:scaleX(0.9224);">Save Mask</span>
<span class="t" style="left:78.65px;top:68.00px;font-size:11.5px;color:#262626;transform:scaleX(0.9725);">Delete</span>
<span class="t" style="left:141.39px;top:37.00px;font-size:11.5px;color:#262626;transform:scaleX(0.9810);">Cut</span>
<span class="t" style="left:141.40px;top:60.00px;font-size:11.5px;color:#262626;transform:scaleX(0.9646);">Copy</span>
<span class="t" style="left:141.62px;top:82.00px;font-size:11.5px;color:#a6a6a6;transform:scaleX(0.8857);">Paste</span>
<span class="t" style="left:184.60px;top:68.00px;font-size:11.5px;color:#262626;transform:scaleX(1.0231);">Documentation</span>
<span class="t" style="left:279.14px;top:68.00px;font-size:11.5px;color:#262626;transform:scaleX(0.9850);">Preview Dialog</span>
<span class="t" style="left:23.05px;top:102.00px;font-size:10.5px;color:#5a5a5a;transform:scaleX(0.8952);">SAVE</span>
<span class="t" style="left:105.00px;top:102.00px;font-size:10.5px;color:#5a5a5a;transform:scaleX(0.9260);">ACTION</span>
<span class="t" style="left:180.16px;top:102.00px;font-size:10.5px;color:#5a5a5a;transform:scaleX(0.9553);">DOCUMENTATION</span>
<span class="t" style="left:295.74px;top:102.00px;font-size:10.5px;color:#5a5a5a;transform:scaleX(0.8737);">PREVIEW</span>
<span class="t" style="left:8.37px;top:120.00px;font-size:12.3px;color:#262626;transform:scaleX(1.0123);">Controls</span>
<span class="t" style="left:9.73px;top:152.00px;font-size:11.5px;color:#6e6e6e;transform:scaleX(0.9475);">Search</span>
<span class="t" style="left:5.48px;top:182.00px;font-size:11px;color:#262626;font-weight:700;transform:scaleX(0.9547);">PARAMETER</span>
<span class="t" style="left:27.54px;top:234.00px;font-size:11.5px;color:#262626;transform:scaleX(0.9801);">Edit</span>
<span class="t" style="left:75.71px;top:234.00px;font-size:11.5px;color:#262626;transform:scaleX(0.9385);">Check Box</span>
<span class="t" style="left:149.84px;top:234.00px;font-size:11.5px;color:#262626;transform:scaleX(0.9820);">Popup</span>
<span class="t" style="left:18.37px;top:294.00px;font-size:11.5px;color:#262626;transform:scaleX(1.0139);">Combo</span>
<span class="t" style="left:28.16px;top:309.00px;font-size:11.5px;color:#262626;transform:scaleX(0.9547);">Box</span>
<span class="t" style="left:82.07px;top:294.00px;font-size:11.5px;color:#262626;transform:scaleX(0.9505);">List Box</span>
<span class="t" style="left:151.85px;top:294.00px;font-size:11.5px;color:#262626;transform:scaleX(0.9739);">Radio</span>
<span class="t" style="left:149.40px;top:309.00px;font-size:11.5px;color:#262626;transform:scaleX(1.0245);">Button</span>
<span class="t" style="left:23.12px;top:355.00px;font-size:11.5px;color:#262626;transform:scaleX(0.9635);">Slider</span>
<span class="t" style="left:91.93px;top:355.00px;font-size:11.5px;color:#262626;transform:scaleX(0.9931);">Dial</span>
<span class="t" style="left:147.22px;top:355.00px;font-size:11.5px;color:#262626;transform:scaleX(0.9615);">Spinner</span>
<span class="t" style="left:26.09px;top:416.00px;font-size:11.5px;color:#262626;transform:scaleX(1.0410);">Unit</span>
<span class="t" style="left:79.06px;top:416.00px;font-size:11.5px;color:#262626;transform:scaleX(0.9406);">Text Area</span>
<span class="t" style="left:147.09px;top:416.00px;font-size:11.5px;color:#262626;transform:scaleX(0.9752);">Custom</span>
<span class="t" style="left:154.47px;top:431.00px;font-size:11.5px;color:#262626;transform:scaleX(0.9196);">Table</span>
<span class="t" style="left:12.26px;top:477.00px;font-size:11.5px;color:#262626;transform:scaleX(0.9549);">Data Type</span>
<span class="t" style="left:91.86px;top:477.00px;font-size:11.5px;color:#262626;transform:scaleX(1.0785);">Min</span>
<span class="t" style="left:155.43px;top:477.00px;font-size:11.5px;color:#262626;">Max</span>
<span class="t" style="left:255.92px;top:122.00px;font-size:11.4px;color:#262626;transform:scaleX(1.0068);">Parameters &amp; Dialog</span>
<span class="t" style="left:392.97px;top:121.00px;font-size:11.4px;color:#444;transform:scaleX(1.0144);">Code</span>
<span class="t" style="left:451.99px;top:121.00px;font-size:11.4px;color:#444;transform:scaleX(1.0063);">Icon</span>
<span class="t" style="left:505.36px;top:121.00px;font-size:11.4px;color:#444;transform:scaleX(1.0243);">Constraints</span>
<span class="t" style="left:244.18px;top:144.00px;font-size:11.2px;color:#262626;font-weight:700;">Type</span>
<span class="t" style="left:385.85px;top:144.00px;font-size:11.2px;color:#262626;font-weight:700;">Prompt</span>
<span class="t" style="left:550.65px;top:144.00px;font-size:11.2px;color:#262626;font-weight:700;">Name</span>
<span class="t" style="left:386.12px;top:167.00px;font-size:11.2px;color:#363636;">%&lt;MaskType&gt;</span>
<span class="t" style="left:550.62px;top:167.00px;font-size:11.2px;color:#363636;">DescGroupVar</span>
<span class="t" style="left:281.00px;top:188.00px;font-size:14.2px;color:#4a4a4a;transform:scaleX(1.0667);">A</span>
<span class="t" style="left:386.12px;top:188.00px;font-size:11.2px;color:#363636;">%&lt;MaskDescription&gt;</span>
<span class="t" style="left:550.62px;top:188.00px;font-size:11.2px;color:#363636;">DescTextVar</span>
<span class="t" style="left:385.93px;top:209.00px;font-size:11.2px;color:#363636;">Parameters</span>
<span class="t" style="left:550.92px;top:209.00px;font-size:11.2px;color:#363636;">ParameterGroupVar</span>
<span class="t" style="left:296.20px;top:230.00px;font-size:11.2px;color:#363636;transform:scaleX(0.9937);">#1</span>
<span class="t" style="left:385.93px;top:230.00px;font-size:11.2px;color:#363636;">Lookup Table Object:</span>
<span class="t" style="left:550.75px;top:230.00px;font-size:11.2px;color:#363636;">lutobject</span>
<span class="t" style="left:550.75px;top:251.00px;font-size:11.2px;color:#363636;">lutcontrol</span>
<span class="t" style="left:720.18px;top:120.00px;font-size:12.3px;color:#262626;transform:scaleX(1.0176);">Property Editor</span>
<span class="t" style="left:737.01px;top:142.00px;font-size:11.3px;color:#262626;transform:scaleX(1.0161);">PROPERTIES</span>
<span class="t" style="left:753.92px;top:163.00px;font-size:11.3px;color:#363636;">Name</span>
<span class="t" style="left:835.55px;top:163.00px;font-size:11.3px;color:#363636;">lutcontrol</span>
<span class="t" style="left:753.92px;top:184.00px;font-size:11.3px;color:#363636;">Prompt</span>
<span class="t" style="left:754.55px;top:204.00px;font-size:11.3px;color:#363636;">Type</span>
<span class="t" style="left:835.55px;top:204.00px;font-size:11.3px;color:#363636;">lookuptablecontrol</span>
<span class="t" style="left:754.55px;top:225.00px;font-size:11.3px;color:#363636;">Table</span>
<span class="t" style="left:753.92px;top:246.00px;font-size:11.3px;color:#363636;">Breakpoints</span>
<span class="t" style="left:753.92px;top:267.00px;font-size:11.3px;color:#363636;">Data Specifi…</span>
<span class="t" style="left:753.92px;top:288.00px;font-size:11.3px;color:#363636;">Lookuptable…</span>
<span class="t" style="left:835.55px;top:288.00px;font-size:11.3px;color:#363636;">lutobject</span>
<span class="t" style="left:737.02px;top:309.00px;font-size:11.3px;color:#262626;">DIALOG</span>
<span class="t" style="left:753.92px;top:330.00px;font-size:11.3px;color:#363636;">Enable</span>
<span class="t" style="left:754.67px;top:351.00px;font-size:11.3px;color:#363636;">Visible</span>
<span class="t" style="left:754.55px;top:372.00px;font-size:11.3px;color:#363636;">Tooltip</span>
<span class="t" style="left:737.02px;top:393.00px;font-size:11.3px;color:#262626;">LAYOUT</span>
<span class="t" style="left:753.92px;top:413.00px;font-size:11.3px;color:#363636;">Row Location</span>
<span class="t" style="left:835.55px;top:413.00px;font-size:11.3px;color:#363636;">new</span>
<span class="t" style="left:753.92px;top:434.00px;font-size:11.3px;color:#363636;">Horizontal S…</span>

<!-- outer black frame -->
<div class="a" style="left:0;top:0;width:952px;height:1px;background:#000;"></div>
<div class="a" style="left:0;top:0;width:1px;height:583px;background:#000;"></div>
<div class="a" style="left:1px;top:1px;width:1px;height:581px;background:rgba(0,0,0,.3);"></div>
<div class="a" style="left:951px;top:0;width:1px;height:583px;background:#000;"></div>
<div class="a" style="left:950px;top:1px;width:1px;height:581px;background:rgba(0,0,0,.3);"></div>
<div class="a" style="left:0;top:582px;width:952px;height:1px;background:#000;"></div>
<div class="a" style="left:0;top:581px;width:952px;height:1px;background:rgba(0,0,0,.7);"></div>
</body></html>
